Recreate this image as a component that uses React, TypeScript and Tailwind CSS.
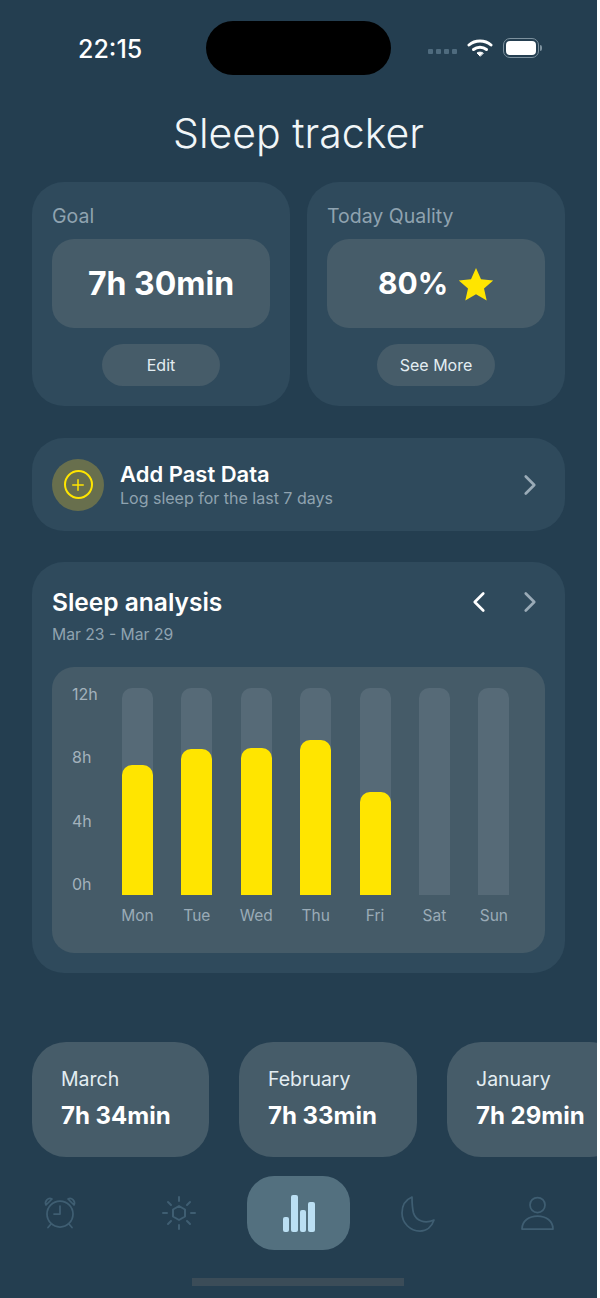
import { ChevronLeft, ChevronRight, Plus } from 'lucide-react';

const bars = [
  { day: 'Mon', height: 130 },
  { day: 'Tue', height: 146 },
  { day: 'Wed', height: 147 },
  { day: 'Thu', height: 155 },
  { day: 'Fri', height: 103 },
  { day: 'Sat', height: 0 },
  { day: 'Sun', height: 0 },
];

const months = [
  { name: 'March', value: '7h 34min', width: 'w-[177px]' },
  { name: 'February', value: '7h 33min', width: 'w-[178px]' },
  { name: 'January', value: '7h 29min', width: 'w-[177px]' },
];

function Star() {
  return (
    <svg width="36" height="34" viewBox="0 0 36 34" fill="#ffe500">
      <path d="M18 1l5 11.2 12.2 1.2-9.2 8.100 2.700 12L18 27.300 7.300 33.500l2.700-12-9.200-8.100L13 12.200z" />
    </svg>
  );
}

function StatCard({ label, button, children }: { label: string; button: string; children: React.ReactNode }) {
  return (
    <div className="flex-1 h-[224px] rounded-[32px] bg-[#2f4a5c] px-5 pt-[22px]">
      <div className="text-[19.5px] leading-[24px] text-[#8fa3b0]">{label}</div>
      <div className="mt-[11px] h-[89px] rounded-[22px] bg-[#465c69] flex items-center justify-center font-bold text-white">
        {children}
      </div>
      <div className="mt-4 flex justify-center">
        <div className="w-[118px] h-[42px] rounded-full bg-[#465c69] flex items-center justify-center text-[16px] text-[#e3edf2]">
          {button}
        </div>
      </div>
    </div>
  );
}

function NavIcon({ children, strokeWidth = 1.75 }: { children: React.ReactNode; strokeWidth?: number }) {
  return (
    <svg width="40" height="40" viewBox="0 0 40 40" fill="none" stroke="#3f5e72" strokeWidth={strokeWidth} strokeLinecap="round" strokeLinejoin="round">
      {children}
    </svg>
  );
}

export default function App() {
  return (
    <div className="w-[600px] h-[1298px] overflow-hidden bg-white">
      <div className="w-[597px] h-[1298px] overflow-hidden bg-[#243e50] font-['Inter',sans-serif] text-white">
        {/* status bar */}
        <div className="flex items-start pt-[21px] h-[75px]">
          <div className="w-[206px] pl-[78px] pt-[13px] text-[25px] leading-[30px] font-medium">22:15</div>
          <div className="w-[185px] h-[54px] rounded-[27px] bg-black" />
          <div className="flex items-center pl-[37px] pt-[17px] gap-[7px]">
            <div className="flex gap-[3px] mt-[7px]">
              <div className="w-[5px] h-[5px] rounded-[1px] bg-[#4f6b7e]" />
              <div className="w-[5px] h-[5px] rounded-[1px] bg-[#4f6b7e]" />
              <div className="w-[5px] h-[5px] rounded-[1px] bg-[#4f6b7e]" />
              <div className="w-[5px] h-[5px] rounded-[1px] bg-[#4f6b7e]" />
            </div>
            <svg width="26" height="20" viewBox="0 0 26 20" fill="none" stroke="#fff" strokeWidth="3" strokeLinecap="round" className="ml-[3px]">
              <path d="M2 7c6-5.300 16-5.300 22 0" />
              <path d="M6.500 11.500c3.700-3 9.300-3 13 0" />
              <path d="M13 18l-3-3c1.800-1.200 4.200-1.200 6 0z" fill="#fff" strokeWidth="1" />
            </svg>
            <div className="flex items-center ml-[3px]">
              <div className="w-[36px] h-[20px] rounded-[7px] border-[1.5px] border-[#7d919e] p-[2px]">
                <div className="w-full h-full rounded-[4px] bg-white" />
              </div>
              <div className="w-[2px] h-[6px] rounded-r-full bg-[#7d919e] ml-[1px]" />
            </div>
          </div>
        </div>

        <h1 className="mt-[30px] text-center text-[41px] leading-[56px] font-light text-[#f1f6f8]">Sleep tracker</h1>

        <div className="mt-[21px] ml-[32px] w-[533px] flex flex-col">
          <div className="flex gap-[17px]">
            <StatCard label="Goal" button="Edit">
              <span className="text-[32px]">7h 30min</span>
            </StatCard>
            <StatCard label="Today Quality" button="See More">
              <span className="text-[30px]">80%</span>
              <span className="ml-[10px]">
                <Star />
              </span>
            </StatCard>
          </div>

          {/* add past data */}
          <div className="mt-[32px] h-[93px] rounded-[32px] bg-[#2f4a5c] flex items-center pl-5 pr-[18px]">
            <div className="w-[52px] h-[52px] rounded-full bg-[#686f4d] flex items-center justify-center">
              <div className="w-[29px] h-[29px] rounded-full border-2 border-[#ffe500] flex items-center justify-center">
                <Plus size={18} color="#ffe500" strokeWidth={2} />
              </div>
            </div>
            <div className="ml-[16px] flex-1">
              <div className="text-[22px] leading-[26px] font-semibold text-white">Add Past Data</div>
              <div className="text-[16px] leading-[22px] text-[#8fa3b0]">Log sleep for the last 7 days</div>
            </div>
            <ChevronRight size={34} color="#9aabb7" strokeWidth={1.9} />
          </div>

          {/* sleep analysis */}
          <div className="mt-[31px] h-[411px] rounded-[32px] bg-[#2f4a5c] px-5 pt-[24px]">
            <div className="flex items-center justify-between h-[32px] -mr-[2px]">
              <div className="text-[24.500px] leading-[32px] font-semibold text-white">Sleep analysis</div>
              <div className="flex items-center gap-[17px]">
                <ChevronLeft size={34} color="#ffffff" strokeWidth={1.9} />
                <ChevronRight size={34} color="#9aabb7" strokeWidth={1.9} />
              </div>
            </div>
            <div className="mt-[6px] text-[15.700px] leading-[22px] text-[#8fa3b0]">Mar 23 - Mar 29</div>

            <div className="mt-[21px] h-[286px] rounded-[22px] bg-[#455b68] pl-5 pt-[21px] flex">
              <div className="w-[50px] h-[207px] flex flex-col justify-between text-[16px] leading-[20px] text-[#a3b2bc]">
                <span className="-mt-[4px]">12h</span>
                <span>8h</span>
                <span>4h</span>
                <span className="mb-[1px]">0h</span>
              </div>
              <div className="flex gap-[28.400px]">
                {bars.map((bar) => (
                  <div key={bar.day} className="w-[31px] flex flex-col items-center">
                    <div className="relative w-[31px] h-[207px] rounded-t-[10px] bg-[#566a77] overflow-hidden">
                      <div className="absolute bottom-0 left-0 w-full rounded-t-[10px] bg-[#ffe500]" style={{ height: bar.height }} />
                    </div>
                    <div className="mt-[10px] text-[15.500px] leading-[22px] text-[#9aabb7] whitespace-nowrap">{bar.day}</div>
                  </div>
                ))}
              </div>
            </div>
          </div>
        </div>

        {/* month cards */}
        <div className="mt-[69px] ml-[32px] flex gap-[30px]">
          {months.map((month) => (
            <div key={month.name} className={`${month.width} shrink-0 h-[115px] rounded-[34px] bg-[#465c69] pl-[29px] pt-[25px]`}>
              <div className="text-[19.500px] leading-[24px] text-[#e3edf2]">{month.name}</div>
              <div className="mt-[10px] text-[24px] leading-[30px] font-bold text-white whitespace-nowrap">{month.value}</div>
            </div>
          ))}
        </div>

        {/* bottom nav */}
        <div className="mt-[19px] ml-[40px] flex items-center h-[74px]">
          <div className="w-[40px]">
            <NavIcon>
              <circle cx="20" cy="21" r="13" />
              <path d="M20 13v8h-6" />
              <path d="M6 12a4.500 4.500 0 0 1 6-6z" />
              <path d="M34 12a4.500 4.500 0 0 0-6-6z" />
              <path d="M11 31l-3 3.500M29 31l3 3.500" />
            </NavIcon>
          </div>
          <div className="ml-[79px] w-[40px]">
            <NavIcon strokeWidth={2}>
              <path d="M20 13l6 3.500v7l-6 3.500-6-3.500v-7z" />
              <path d="M20 4v4M20 32v4M4 20h4M32 20h4M9 9l3 3M31 9l-3 3M9 31l3-3M31 31l-3-3" />
            </NavIcon>
          </div>
          <div className="ml-[48px] w-[103px] h-[74px] rounded-[27px] bg-[#53707f] flex items-end justify-center gap-[2px] pb-[18px]">
            <div className="w-[6.500px] h-[15px] rounded-[2px] bg-[#bbdff3]" />
            <div className="w-[6.500px] h-[37px] rounded-[2px] bg-[#bbdff3]" />
            <div className="w-[6.500px] h-[22px] rounded-[2px] bg-[#bbdff3]" />
            <div className="w-[6.500px] h-[30px] rounded-[2px] bg-[#bbdff3]" />
          </div>
          <div className="ml-[49px] w-[40px]">
            <NavIcon>
              <path d="M13 4C6 7 3 13 3 20c0 10 8 18 18 18 7 0 12-5 14-11-9 4-18 1-20.500-7C13 14 13 9 13 4z" />
            </NavIcon>
          </div>
          <div className="ml-[79px] w-[40px]">
            <NavIcon>
              <circle cx="19.500" cy="12" r="7.500" />
              <path d="M4 36c0-8 7-13 15.500-13S35 28 35 36z" />
            </NavIcon>
          </div>
        </div>

        {/* home indicator */}
        <div className="mt-[28px] ml-[192px] w-[212px] h-[8px] bg-[#3b4c58]" />
      </div>
    </div>
  );
}
